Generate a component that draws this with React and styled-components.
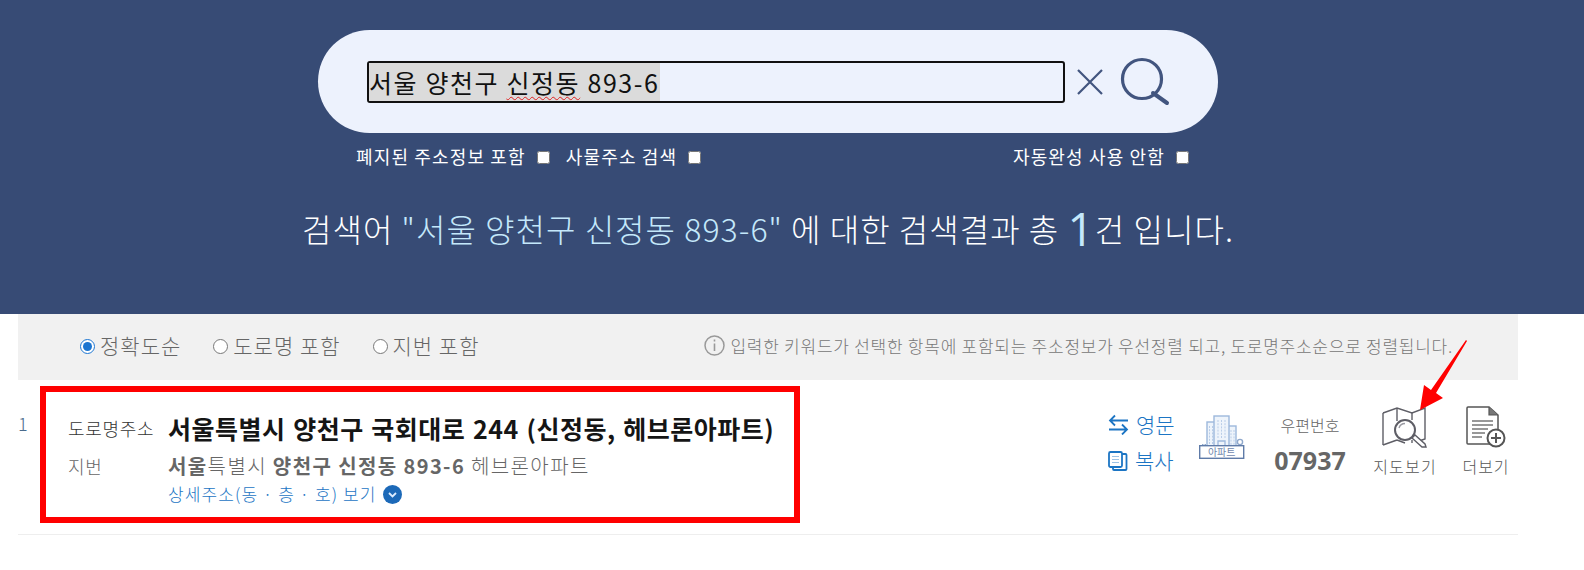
import React from "react";
import styled, { createGlobalStyle } from "styled-components";

const Global = createGlobalStyle`
  html, body { margin: 0; padding: 0; background: #fff; }
  body { font-family: "Noto Sans CJK KR", "Noto Sans", sans-serif; width: 1584px; height: 570px; overflow: hidden; }
  * { box-sizing: border-box; }
`;

const Page = styled.div`
  position: relative;
  width: 1584px;
  height: 570px;
`;

const Hero = styled.header`
  height: 314px;
  background: #374b75;
  padding: 30px 48px 0 0;
  display: flex;
  flex-direction: column;
  align-items: center;
`;

const SearchPill = styled.div`
  width: 900px;
  height: 103px;
  border-radius: 52px;
  background: #edf2fd;
  display: flex;
  align-items: center;
  padding-left: 49px;
`;

const SearchField = styled.div`
  width: 698px;
  height: 42px;
  border: 2px solid #111;
  border-radius: 3px;
  display: flex;
  align-items: center;
  font-size: 25px;
  letter-spacing: 1.6px;
  color: #111;
  white-space: nowrap;
`;

const Selected = styled.span`
  background: #dbdbdb;
  height: 100%;
  line-height: 38px;
`;

const Misspelled = styled.span`
  text-decoration: underline wavy #e02020 1px;
  text-underline-offset: 3px;
`;

const IconButton = styled.span`
  display: flex;
  margin-left: ${(p) => p.$gap}px;
`;

const OptionRow = styled.div`
  width: 900px;
  height: 46px;
  padding: 0 29px 0 38px;
  display: flex;
  align-items: center;
  color: #fff;
  font-size: 18px;
  font-weight: 400;
  letter-spacing: 1.15px;
`;

const Option = styled.label`
  display: flex;
  align-items: center;
  gap: 11px;
  margin-right: ${(p) => p.$right || 0}px;
  margin-left: ${(p) => (p.$push ? "auto" : 0)};
  input {
    margin: 3px 0 0;
    width: 13px;
    height: 13px;
  }
`;

const ResultLine = styled.p`
  margin: 19px 0 0;
  height: 60px;
  display: flex;
  align-items: center;
  font-size: 32px;
  font-weight: 300;
  letter-spacing: 1.05px;
  color: #fff;
  white-space: pre;
`;

const Term = styled.span`
  color: #c4e8fb;
`;

const Count = styled.span`
  color: #c4e8fb;
  font-family: "Open Sans", sans-serif;
  font-size: 46px;
  font-weight: 400;
`;

const Body = styled.main`
  width: 1500px;
  margin-left: 18px;
`;

const SortBar = styled.div`
  height: 66px;
  background: #f1f1f1;
  display: flex;
  align-items: center;
  padding: 0 65px 4px 62px;
  color: #666;
`;

const SortOption = styled.label`
  display: flex;
  align-items: center;
  gap: 5px;
  font-size: 21px;
  font-weight: 300;
  letter-spacing: 1px;
  margin-right: 32px;
  input {
    margin: 2px 0 0;
    width: 15px;
    height: 15px;
    accent-color: #1c75d0;
  }
`;

const SortHint = styled.div`
  margin-left: auto;
  display: flex;
  align-items: center;
  gap: 5px;
  font-size: 17px;
  font-weight: 300;
  letter-spacing: 0.75px;
  color: #777;
  white-space: nowrap;
`;

const ResultRow = styled.article`
  height: 155px;
  border-bottom: 1px solid #eee;
  display: flex;
  align-items: flex-start;
  padding-top: 6px;
`;

const Rank = styled.span`
  width: 22px;
  margin-top: 24px;
  font-size: 18px;
  font-weight: 300;
  color: #4a6b8c;
`;

const Highlight = styled.section`
  width: 760px;
  height: 137px;
  border: 6px solid #ff0000;
  padding: 20px 0 0 22px;
  display: grid;
  grid-template-columns: 100px 1fr;
  grid-auto-rows: min-content;
`;

const FieldName = styled.span`
  font-size: 18px;
  font-weight: 300;
  letter-spacing: 0.7px;
  color: ${(p) => p.$color};
  line-height: ${(p) => p.$height}px;
`;

const RoadAddress = styled.strong`
  font-size: 25px;
  font-weight: 700;
  letter-spacing: 0.5px;
  word-spacing: 1.5px;
  color: #151515;
  line-height: 32px;
  white-space: nowrap;
`;

const LotAddress = styled.span`
  font-size: 20px;
  font-weight: 300;
  letter-spacing: 1.4px;
  color: #666;
  line-height: 44px;
  white-space: nowrap;
  b { font-weight: 700; }
`;

const DetailLink = styled.a`
  grid-column: 2;
  margin-top: -4px;
  display: flex;
  align-items: center;
  gap: 7px;
  font-size: 17px;
  font-weight: 300;
  letter-spacing: 1.1px;
  color: #1c75c4;
  line-height: 20px;
`;

const Actions = styled.div`
  margin-left: 308px;
  margin-top: 18px;
  display: flex;
  align-items: flex-start;
`;

const LinkStack = styled.div`
  width: 90px;
  display: flex;
  flex-direction: column;
  gap: 4px;
  padding-top: 4px;
`;

const BlueLink = styled.a`
  display: flex;
  align-items: center;
  gap: 7px;
  height: 32px;
  font-size: 21px;
  font-weight: 300;
  color: #1c75c4;
`;

const Building = styled.div`
  width: 46px;
  margin: 11px 0 0 1px;
`;

const ZipBlock = styled.div`
  width: 120px;
  margin-left: 5px;
  padding-top: 9px;
  display: flex;
  flex-direction: column;
  align-items: center;
  color: #666;
`;

const ZipLabel = styled.span`
  font-size: 16px;
  font-weight: 300;
  line-height: 24px;
`;

const ZipCode = styled.strong`
  font-size: 25px;
  font-weight: 700;
  font-family: "Open Sans", sans-serif;
  line-height: 46px;
`;

const ToolButton = styled.a`
  width: ${(p) => p.$width}px;
  margin-left: ${(p) => p.$left}px;
  padding-top: ${(p) => p.$top}px;
  display: flex;
  flex-direction: column;
  align-items: center;
  font-size: 16px;
  font-weight: 300;
  letter-spacing: ${(p) => p.$spacing}px;
  color: #555;
  white-space: nowrap;
  gap: ${(p) => p.$gap}px;
`;

const Annotation = styled.svg`
  position: absolute;
  left: 1395px;
  top: 338px;
`;

const CloseIcon = () => (
  <svg width="28" height="28" viewBox="0 0 28 28" fill="none" stroke="#42557f" strokeWidth="2.2">
    <path d="M2 2 L26 26 M26 2 L2 26" />
  </svg>
);

const SearchIcon = () => (
  <svg width="50" height="50" viewBox="0 0 50 50" fill="none" stroke="#42557f" strokeWidth="3.2">
    <circle cx="22" cy="22" r="19.5" />
    <path d="M33 36 L47 46" strokeWidth="4" strokeLinecap="round" />
  </svg>
);

const InfoIcon = () => (
  <svg width="21" height="21" viewBox="0 0 21 21" fill="none" stroke="#999">
    <circle cx="10.5" cy="10.5" r="9.5" strokeWidth="1.5" />
    <path d="M10.5 8.5 V16 M10.5 4.5 V6.5" strokeWidth="1.6" />
  </svg>
);

const ChevronBadge = () => (
  <svg width="19" height="19" viewBox="0 0 19 19">
    <circle cx="9.5" cy="9.5" r="9.5" fill="#1c69b8" />
    <path d="M6 8 L9.5 11.5 L13 8" fill="none" stroke="#dcecff" strokeWidth="1.8" />
  </svg>
);

const SwapIcon = () => (
  <svg width="21" height="21" viewBox="0 0 21 21" fill="none" stroke="#1c75c4" strokeWidth="1.8">
    <path d="M20 6.5 H2 M7 1.5 L2 6.5 L7 11.5" />
    <path d="M1 15.5 H19 M14 10.5 L19 15.5 L14 20.5" />
  </svg>
);

const CopyIcon = () => (
  <svg width="20" height="21" viewBox="0 0 20 21" fill="none" stroke="#1c75c4">
    <rect x="1" y="2" width="13" height="15" rx="1.5" strokeWidth="1.8" />
    <path d="M14 4 H17.5 A1 1 0 0 1 18.5 5 V19 A1 1 0 0 1 17.5 20 H6 A1 1 0 0 1 5 19 V17" strokeWidth="1.8" />
    <path d="M4 6.5 H11 M4 9.5 H11 M4 12.5 H11" stroke="#9dc3e6" />
  </svg>
);

const BuildingIcon = () => (
  <svg width="46" height="44" viewBox="0 0 46 44" fill="none">
    <g stroke="#9db8dc" strokeWidth="1.4" fill="#eef4fb">
      <rect x="8" y="7" width="8" height="25" />
      <rect x="29" y="11" width="8" height="21" />
      <rect x="15" y="1" width="15" height="31" />
    </g>
    <g stroke="#b9cde8" strokeWidth="1" strokeDasharray="2 1.2">
      <path d="M10.5 11 V30 M13.5 11 V30 M19 5 V23 M22.5 5 V23 M26 5 V23 M32 15 V30 M35 15 V30" />
    </g>
    <path d="M19 31 V26 H26 V31" stroke="#9db8dc" strokeWidth="1.3" />
    <circle cx="41" cy="27" r="2.6" stroke="#8fa8cc" strokeWidth="1.4" />
    <path d="M3 30 H7" stroke="#8fa8cc" strokeWidth="2" strokeDasharray="1.5 1" />
    <rect x="0.7" y="30.7" width="44" height="12.6" fill="#fff" stroke="#5f7ba8" strokeWidth="1.4" />
    <text x="22.7" y="40.6" textAnchor="middle" fontSize="10" fill="#6f88ae" fontFamily="Noto Sans CJK KR, sans-serif">아파트</text>
  </svg>
);

const MapIcon = () => (
  <svg width="46" height="41" viewBox="0 0 46 41" fill="none" stroke="#5e5e66" strokeWidth="1.4">
    <path d="M1 6 L15 1 L30 6 L43 1 V32 L37 34 M15 33 L1 38 Z" />
    <path d="M1 6 V38 M15 1 V14 M30 6 V13 M15 33 L23 36 M30 33 V36" />
    <circle cx="23" cy="23" r="10" strokeWidth="2" fill="#fff" />
    <path d="M17 21 A6.5 6.5 0 0 1 23 16.5" stroke="#9a9aa2" />
    <path d="M30 31 L33 28 L43 37 L44 40 L40 40 Z" fill="#fff" strokeWidth="1.4" />
  </svg>
);

const DocumentIcon = () => (
  <svg width="40" height="42" viewBox="0 0 40 42" fill="none" stroke="#555">
    <path d="M25 38 H2 Q1 38 1 37 V2 Q1 1 2 1 H23 L32 9 V24" strokeWidth="1.5" />
    <path d="M23 1 V9 H32" fill="#777" strokeWidth="1.2" />
    <path d="M6 15 H27 M6 19 H27 M6 23 H22 M6 27 H19 M6 31 H16" strokeWidth="1.5" stroke="#777" />
    <circle cx="30" cy="32" r="8.5" strokeWidth="2" fill="#fff" />
    <path d="M30 27 V37 M25 32 H35" strokeWidth="2" />
  </svg>
);

const App = () => (
  <Page>
    <Global />
    <Hero>
      <SearchPill>
        <SearchField>
          <Selected>
            서울 양천구 <Misspelled>신정동</Misspelled> 893-6
          </Selected>
        </SearchField>
        <IconButton $gap={11}>
          <CloseIcon />
        </IconButton>
        <IconButton $gap={16}>
          <SearchIcon />
        </IconButton>
      </SearchPill>
      <OptionRow>
        <Option $right={16}>
          폐지된 주소정보 포함 <input type="checkbox" />
        </Option>
        <Option>
          사물주소 검색 <input type="checkbox" />
        </Option>
        <Option $push>
          자동완성 사용 안함 <input type="checkbox" />
        </Option>
      </OptionRow>
      <ResultLine>
        검색어 <Term>"서울 양천구 신정동 893-6"</Term> 에 대한 검색결과 총 <Count>1</Count>건 입니다.
      </ResultLine>
    </Hero>
    <Body>
      <SortBar>
        <SortOption>
          <input type="radio" name="sort" defaultChecked />
          정확도순
        </SortOption>
        <SortOption>
          <input type="radio" name="sort" />
          도로명 포함
        </SortOption>
        <SortOption>
          <input type="radio" name="sort" />
          지번 포함
        </SortOption>
        <SortHint>
          <InfoIcon />
          입력한 키워드가 선택한 항목에 포함되는 주소정보가 우선정렬 되고, 도로명주소순으로 정렬됩니다.
        </SortHint>
      </SortBar>
      <ResultRow>
        <Rank>1</Rank>
        <Highlight>
          <FieldName $color="#333" $height={32}>도로명주소</FieldName>
          <RoadAddress>서울특별시 양천구 국회대로 244 (신정동, 헤브론아파트)</RoadAddress>
          <FieldName $color="#666" $height={44}>지번</FieldName>
          <LotAddress>
            <b>서울</b>특별시 <b>양천구 신정동 893-6</b> 헤브론아파트
          </LotAddress>
          <DetailLink>
            상세주소(동 · 층 · 호) 보기 <ChevronBadge />
          </DetailLink>
        </Highlight>
        <Actions>
          <LinkStack>
            <BlueLink>
              <SwapIcon />
              영문
            </BlueLink>
            <BlueLink>
              <CopyIcon />
              복사
            </BlueLink>
          </LinkStack>
          <Building>
            <BuildingIcon />
          </Building>
          <ZipBlock>
            <ZipLabel>우편번호</ZipLabel>
            <ZipCode>07937</ZipCode>
          </ZipBlock>
          <ToolButton $width={64} $left={3} $top={3} $gap={6} $spacing={1.2}>
            <MapIcon />
            지도보기
          </ToolButton>
          <ToolButton $width={50} $left={24} $top={2} $gap={6} $spacing={1}>
            <DocumentIcon />
            더보기
          </ToolButton>
        </Actions>
      </ResultRow>
    </Body>
    <Annotation width="80" height="75" viewBox="0 0 80 75">
      <path d="M72 3 L41 55 L48 60 L25 72 L29 47 L36 52 L71 2 Z" fill="#ff0000" />
    </Annotation>
  </Page>
);

export default App;
